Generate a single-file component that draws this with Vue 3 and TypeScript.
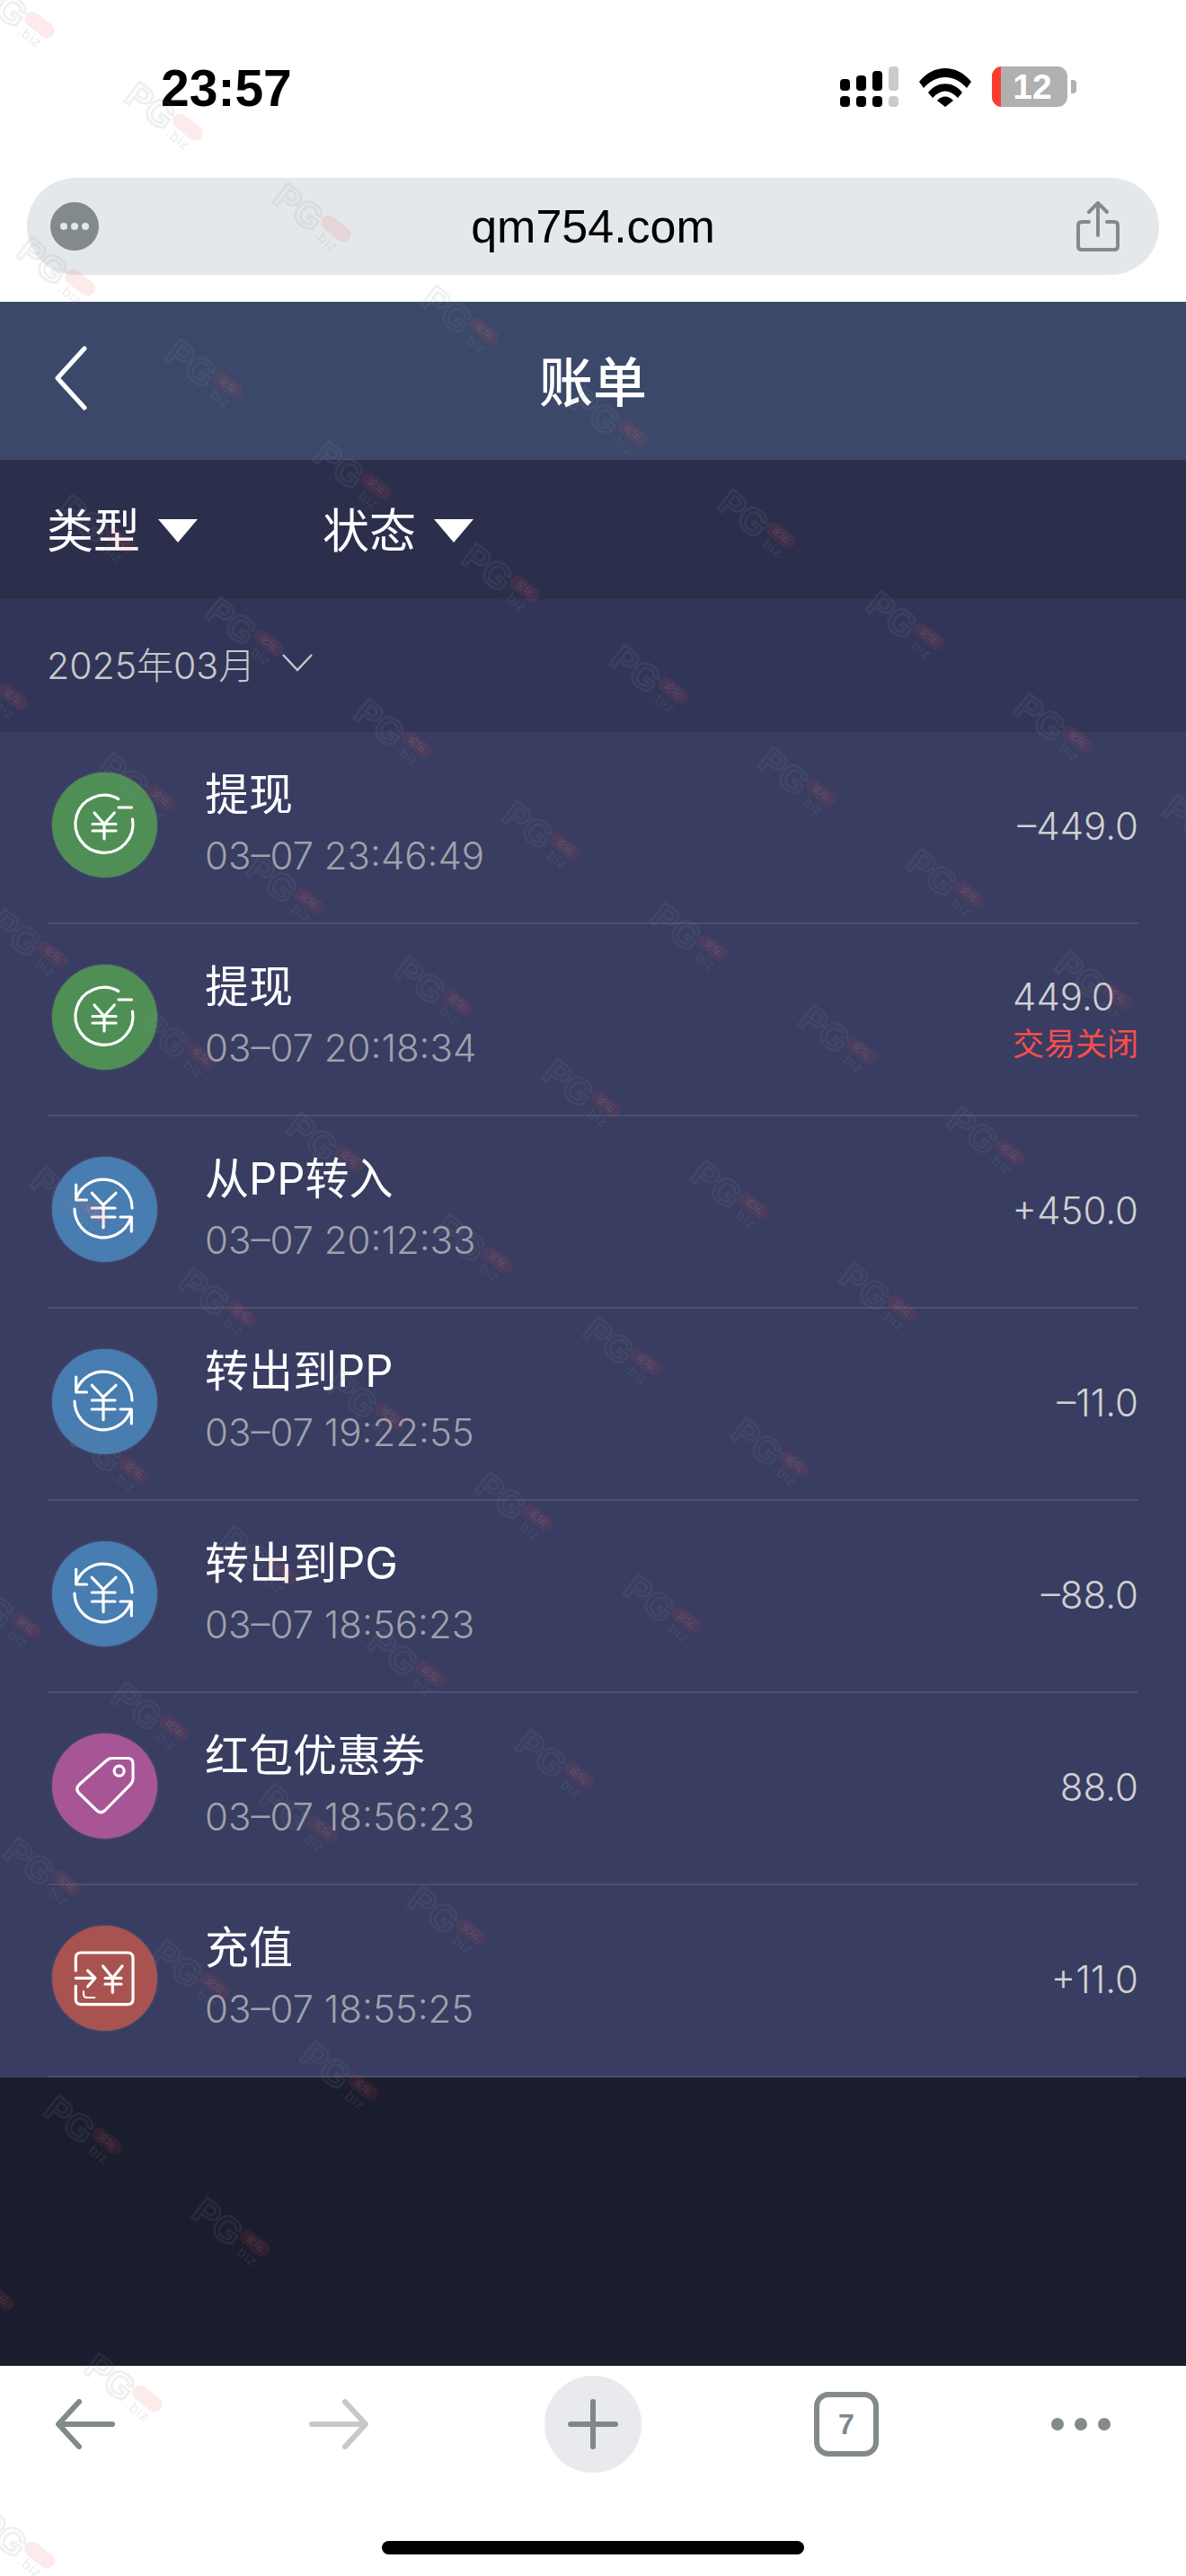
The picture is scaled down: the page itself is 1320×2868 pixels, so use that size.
<template>
  <div class="phone">
    <div class="status">
      <span class="clock">23:57</span>
      <div class="status-icons">
        <svg class="signal" width="66" height="46" viewBox="0 0 66 46">
          <rect x="0" y="14" width="11" height="13" rx="4" />
          <rect x="18" y="10" width="11" height="17" rx="4" />
          <rect x="36" y="5" width="11" height="22" rx="4" />
          <rect x="54" y="0" width="11" height="27" rx="4" fill="#cbcbcb" />
          <rect x="0" y="33" width="11" height="12" rx="4" />
          <rect x="18" y="33" width="11" height="12" rx="4" />
          <rect x="36" y="33" width="11" height="12" rx="4" />
          <rect x="54" y="33" width="11" height="12" rx="4" fill="#cbcbcb" />
        </svg>
        <svg class="wifi" width="58" height="44" viewBox="0 0 58 44">
          <path d="M0 16 C16 -4 42 -4 58 16 L53 23 C39 7 19 7 5 23 Z" />
          <path d="M10 28 C20 15 38 15 48 28 L43 34 C34 24 24 24 15 34 Z" />
          <path d="M20 37 C25 31 33 31 38 37 L29 44 Z" />
        </svg>
        <div class="battery">
          <div class="battery-body"><span class="battery-red"></span><span class="battery-num">12</span></div>
          <span class="battery-cap"></span>
        </div>
      </div>
    </div>

    <div class="urlbar">
      <span class="url-more"><i></i><i></i><i></i></span>
      <span class="url-text">qm754.com</span>
      <svg class="url-share" width="48" height="56" viewBox="0 0 48 56" fill="none" stroke="#828a90" stroke-width="4" stroke-linecap="round" stroke-linejoin="round">
        <path d="M14 23 H6 Q2 23 2 27 V50 Q2 54 6 54 H42 Q46 54 46 50 V27 Q46 23 42 23 H34" />
        <path d="M24 38 V3 M14 12 L24 2 L34 12" />
      </svg>
    </div>

    <header class="nav">
      <svg class="nav-back" width="40" height="72" viewBox="0 0 40 72" fill="none" stroke="#fff" stroke-width="5" stroke-linecap="round" stroke-linejoin="round">
        <path d="M34 3 L4 36 L34 69" />
      </svg>
      <h1 class="nav-title">账单</h1>
    </header>

    <div class="filters">
      <div class="filter"><span>类型</span><i class="tri"></i></div>
      <div class="filter"><span>状态</span><i class="tri"></i></div>
    </div>

    <div class="month">
      <span>2025年03月</span>
      <svg width="34" height="20" viewBox="0 0 34 20" fill="none" stroke="#c8c8cc" stroke-width="2.4">
        <path d="M1 1 L17 18 L33 1" />
      </svg>
    </div>

    <ul class="list">
      <li v-for="item in rows" :key="item.time + item.title" class="row">
        <div class="row-inner">
          <span class="badge" :class="item.kind">
            <svg width="117" height="117" viewBox="0 0 117 117" fill="none" stroke="#fff" stroke-width="3.2" stroke-linecap="round" stroke-linejoin="round">
              <template v-if="item.kind === 'out'">
                <path d="M73.7 29.5 A32 32 0 1 0 89.5 52" />
                <path d="M74 39 H88.5" />
                <path d="M47 45 L58 57.5 L69.3 45 M45 57.5 H71 M45 65 H71 M58 57.5 V74" />
              </template>
              <template v-else-if="item.kind === 'swap'">
                <path d="M27 46 A32 32 0 0 1 89 57" />
                <path d="M25 58 A32 32 0 0 0 87 69" />
                <path d="M26.7 31 V48 H38.5 M76 67 H88.3 V83" />
                <path d="M44.3 40.3 L57 53.7 L71 40.3 M44.3 57 H70 M44.3 67 H70 M57 53.7 V78.7" />
              </template>
              <template v-else-if="item.kind === 'tag'">
                <path d="M60 30.5 Q63 27.5 67 27.5 L84 27.5 Q90 27.5 90 33.5 L90 50 Q90 54 87 57 L59 85.5 Q54 90 49.5 85.5 L30 66.5 Q25.5 62 30 57 Z" />
                <circle cx="74.6" cy="41.7" r="5.5" />
              </template>
              <template v-else>
                <path d="M26.3 50 V36 Q26.3 30 32.3 30 H84 Q90 30 90 36 V81.7 Q90 87.7 84 87.7 H32.3 Q26.3 87.7 26.3 81.7 V67" />
                <path d="M26.3 58.3 H47.3 M39.6 50 L48 58.3 L39.6 67.7" />
                <path d="M35 73 V76 Q35 80 39 80 H47.3" stroke-width="2" />
                <path d="M56.6 45 L67.3 58.3 L78 45 M59 58.3 H77 M59 65 H77 M67.3 58.3 V74.3" />
              </template>
            </svg>
          </span>
          <div class="row-main">
            <div class="row-title">{{ item.title }}</div>
            <div class="row-time">{{ item.time }}</div>
          </div>
          <div class="row-side">
            <div class="row-amount">{{ item.amount }}</div>
            <div v-if="item.note" class="row-note">{{ item.note }}</div>
          </div>
        </div>
      </li>
    </ul>

    <div class="filler"></div>

    <footer class="toolbar">
      <div class="tools">
        <svg width="66" height="56" viewBox="0 0 66 56" fill="none" stroke="#828a8c" stroke-width="6" stroke-linecap="round" stroke-linejoin="round">
          <path d="M63 28 H4 M26 3 L3 28 L26 53" />
        </svg>
        <svg class="tool-forward" width="66" height="56" viewBox="0 0 66 56" fill="none" stroke="#c8c8c8" stroke-width="6" stroke-linecap="round" stroke-linejoin="round">
          <path d="M3 28 H62 M40 3 L63 28 L40 53" />
        </svg>
        <span class="plus">
          <svg width="56" height="56" viewBox="0 0 56 56" fill="none" stroke="#7f868c" stroke-width="6" stroke-linecap="round">
            <path d="M28 3 V53 M3 28 H53" />
          </svg>
        </span>
        <span class="tabs">7</span>
        <span class="dots"><i></i><i></i><i></i></span>
      </div>
      <div class="home"></div>
    </footer>

    <div class="marks">
      <div v-for="m in marks" :key="m.id" class="mark" :style="{ left: m.x + 'px', top: m.y + 'px' }">
        <span class="mark-pg">PG</span>
        <span class="mark-side">
          <span class="mark-pill">论坛</span>
          <span class="mark-biz">.biz</span>
        </span>
      </div>
    </div>
  </div>
</template>

<script setup lang="ts">
interface Row {
  kind: 'out' | 'swap' | 'tag' | 'charge'
  title: string
  time: string
  amount: string
  note?: string
}

const rows: Row[] = [
  { kind: 'out', title: '提现', time: '03–07 23:46:49', amount: '–449.0' },
  { kind: 'out', title: '提现', time: '03–07 20:18:34', amount: '449.0', note: '交易关闭' },
  { kind: 'swap', title: '从PP转入', time: '03–07 20:12:33', amount: '+450.0' },
  { kind: 'swap', title: '转出到PP', time: '03–07 19:22:55', amount: '–11.0' },
  { kind: 'swap', title: '转出到PG', time: '03–07 18:56:23', amount: '–88.0' },
  { kind: 'tag', title: '红包优惠券', time: '03–07 18:56:23', amount: '88.0' },
  { kind: 'charge', title: '充值', time: '03–07 18:55:25', amount: '+11.0' }
]

// watermark sheet is a rotated grid, 9 tiles across
const marks: { id: string; x: number; y: number }[] = []
for (let n = 0; n < 13; n++) {
  for (let i = 0; i < 9; i++) {
    const x = -32 + i * 165 - n * 120
    const y = -2 + i * 113.5 + n * 173.5
    if (x > -110 && x < 1320 && y < 2868) {
      marks.push({ id: i + '_' + n, x, y })
    }
  }
}
</script>

<style>
html,
body {
  margin: 0;
  background: #fff;
}
</style>

<style scoped>
.phone {
  position: relative;
  width: 1320px;
  height: 2868px;
  overflow: hidden;
  display: flex;
  flex-direction: column;
  background: #fff;
  font-family: Inter, "Noto Sans CJK SC", sans-serif;
}

.status {
  height: 198px;
  flex: none;
  box-sizing: border-box;
  padding: 66px 122px 0 179px;
  display: flex;
  justify-content: space-between;
  align-items: flex-start;
}

.clock {
  font-family: "Liberation Sans", sans-serif;
  font-size: 57px;
  font-weight: 700;
  line-height: 64px;
  color: #000;
}

.status-icons {
  display: flex;
  align-items: flex-start;
  margin-top: 8px;
}

.signal {
  fill: #000;
  margin-right: 22px;
}

.wifi {
  fill: #000;
  margin-right: 23px;
  margin-top: 1px;
}

.battery {
  display: flex;
  align-items: center;
}

.battery-body {
  position: relative;
  width: 84px;
  height: 45px;
  box-sizing: border-box;
  padding-left: 6px;
  border-radius: 11px;
  overflow: hidden;
  background: #b0b0b0;
  text-align: center;
}

.battery-red {
  position: absolute;
  left: 0;
  top: 0;
  bottom: 0;
  width: 10px;
  background: #ff3b30;
}

.battery-num {
  font-family: "Liberation Sans", sans-serif;
  font-size: 39px;
  font-weight: 700;
  line-height: 45px;
  color: #fff;
}

.battery-cap {
  width: 6px;
  height: 15px;
  margin-left: 4px;
  border-radius: 0 4px 4px 0;
  background: #b0b0b0;
}

.urlbar {
  flex: none;
  position: relative;
  height: 108px;
  margin: 0 30px 30px;
  border-radius: 54px;
  background: #e5e8eb;
  display: flex;
  align-items: center;
  justify-content: center;
}

.url-more {
  position: absolute;
  left: 26px;
  top: 27px;
  width: 54px;
  height: 54px;
  border-radius: 50%;
  background: #828a8c;
  display: flex;
  align-items: center;
  justify-content: center;
  gap: 4px;
}

.url-more i {
  width: 8px;
  height: 8px;
  border-radius: 50%;
  background: #e5e8eb;
}

.url-text {
  font-family: "Liberation Sans", sans-serif;
  font-size: 52px;
  color: #000;
}

.url-share {
  position: absolute;
  right: 44px;
  top: 26px;
}

.nav {
  flex: none;
  position: relative;
  height: 176px;
  box-sizing: border-box;
  padding-bottom: 6px;
  background: #3b4869;
  display: flex;
  align-items: center;
  justify-content: center;
}

.nav-back {
  position: absolute;
  left: 60px;
  top: 49px;
}

.nav-title {
  margin: 0;
  font-size: 60px;
  font-weight: 500;
  color: #fff;
}

.filters {
  flex: none;
  height: 155px;
  box-sizing: border-box;
  padding: 0 0 4px 52px;
  background: #2b2f4c;
  display: flex;
  align-items: center;
  gap: 139px;
}

.filter {
  display: flex;
  align-items: center;
  gap: 20px;
  font-size: 52px;
  color: #fff;
}

.tri {
  width: 0;
  height: 0;
  border-left: 22px solid transparent;
  border-right: 22px solid transparent;
  border-top: 26px solid #fff;
  margin-top: 6px;
}

.month {
  flex: none;
  height: 148px;
  box-sizing: border-box;
  padding: 0 0 6px 52px;
  background: #313658;
  display: flex;
  align-items: center;
  gap: 30px;
  font-size: 41px;
  font-weight: 300;
  color: #c8c8cc;
}

.list {
  flex: none;
  margin: 0;
  padding: 0;
  list-style: none;
  background: #383d61;
}

.row {
  height: 214px;
  box-sizing: border-box;
  padding: 0 53px;
}

.row-inner {
  height: 100%;
  box-sizing: border-box;
  padding-bottom: 6px;
  border-bottom: 2px solid #4b4f70;
  display: flex;
  align-items: center;
}

.badge {
  width: 117px;
  height: 117px;
  margin-left: 5px;
  flex: none;
  border-radius: 50%;
  box-shadow: 0 0 3px rgba(255, 255, 255, 0.18);
}

.badge svg {
  display: block;
}

.out {
  background: #4f8f55;
}

.swap {
  background: #477db0;
}

.tag {
  background: #a85595;
}

.charge {
  background: #a8534f;
}

.row-main {
  margin-left: 53px;
  flex: 1;
}

.row-title {
  font-size: 49px;
  line-height: 60px;
  color: #fff;
  margin-top: -4px;
}

.row-time {
  margin-top: 13px;
  font-size: 42px;
  font-weight: 300;
  line-height: 50px;
  color: #9fa1ab;
}

.row-side {
  text-align: right;
  padding-top: 3px;
}

.row-amount {
  font-size: 42px;
  font-weight: 300;
  line-height: 50px;
  color: #d0d0d2;
  text-align: left;
}

.row-note {
  margin-top: 6px;
  font-size: 35px;
  line-height: 42px;
  color: #fa4d4d;
}

.row-side:not(:has(.row-note)) .row-amount {
  text-align: right;
}

.filler {
  flex: 1;
  background: #1a1d2e;
}

.toolbar {
  flex: none;
  height: 234px;
  box-sizing: border-box;
  background: #fff;
  padding-top: 11px;
}

.tools {
  height: 108px;
  display: flex;
  align-items: center;
  gap: 192px;
  padding-left: 62px;
}

.tool-forward {
  margin-left: 24px;
}

.plus {
  width: 108px;
  height: 108px;
  margin-left: 4px;
  border-radius: 50%;
  background: #e9eaee;
  display: flex;
  align-items: center;
  justify-content: center;
}

.tabs {
  width: 72px;
  height: 72px;
  box-sizing: border-box;
  border: 6px solid #828a8c;
  border-radius: 16px;
  display: flex;
  align-items: center;
  justify-content: center;
  font-family: "Liberation Sans", sans-serif;
  font-size: 32px;
  font-weight: 700;
  color: #7f868c;
}

.dots {
  display: flex;
  gap: 12px;
}

.dots i {
  width: 14px;
  height: 14px;
  border-radius: 50%;
  background: #828a8c;
}

.home {
  width: 470px;
  height: 15px;
  margin: 76px auto 0;
  border-radius: 8px;
  background: #000;
}

.marks {
  position: absolute;
  inset: 0;
  pointer-events: none;
  overflow: hidden;
}

.mark {
  position: absolute;
  width: 108px;
  height: 44px;
  display: flex;
  transform: rotate(38deg);
  transform-origin: 50% 50%;
}

.mark-pg {
  font-family: "Liberation Sans", sans-serif;
  font-size: 40px;
  font-weight: 700;
  line-height: 42px;
  color: transparent;
  -webkit-text-stroke: 3px rgba(135, 140, 150, 0.14);
}

.mark-side {
  display: flex;
  flex-direction: column;
  align-items: center;
  margin-left: -1px;
  margin-top: 6px;
}

.mark-pill {
  width: 38px;
  height: 17px;
  border-radius: 9px;
  background: rgba(240, 60, 70, 0.11);
  font-size: 11px;
  line-height: 17px;
  text-align: center;
  color: rgba(255, 255, 255, 0.12);
}

.mark-biz {
  font-family: "Liberation Sans", sans-serif;
  font-size: 16px;
  line-height: 18px;
  letter-spacing: 1px;
  color: rgba(135, 140, 150, 0.18);
}
</style>
